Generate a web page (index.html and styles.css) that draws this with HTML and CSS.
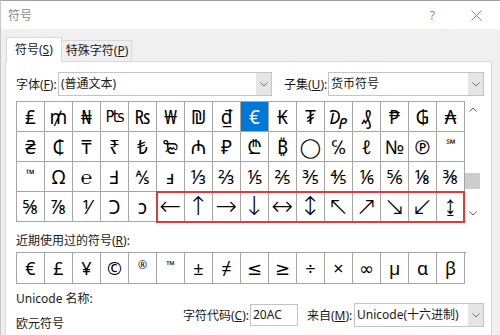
FILE: index.html
```html
<!DOCTYPE html>
<html>
	<head>
	<meta charset="utf-8">
	<meta name="viewport" content="width=device-width, initial-scale=1.0"/>
	<link rel="stylesheet" href="styles.css">
	</head>
	<body>
		<div class="window">
			<div class="titlebar">
				<span class="title">符号</span>
				<span class="help">?</span>
				<svg class="close" width="11" height="11" viewBox="0 0 11 11"><path d="M0.5 0.5 L10.5 10.5 M10.5 0.5 L0.5 10.5" stroke="#8c8c8c" stroke-width="1" fill="none"/></svg>
			</div>
			<div class="tabs">
				<div class="tab active">符号(<u>S</u>)</div>
				<div class="tab">特殊字符(<u>P</u>)</div>
			</div>
			<div class="panel">
				<div class="fontrow">
					<span class="lbl font-lbl">字体(<u>F</u>):</span>
					<div class="combo font-combo">
						<span class="combo-text">(普通文本)</span>
						<span class="drop"><svg width="8" height="5" viewBox="0 0 8 5"><polyline points="0.5,0.5 4,4 7.5,0.5" stroke="#707070" fill="none"/></svg></span>
					</div>
					<span class="lbl subset-lbl">子集(<u>U</u>):</span>
					<div class="combo subset-combo">
						<span class="combo-text">货币符号</span>
						<span class="drop"><svg width="8" height="5" viewBox="0 0 8 5"><polyline points="0.5,0.5 4,4 7.5,0.5" stroke="#707070" fill="none"/></svg></span>
					</div>
				</div>

				<div class="grid-wrap">
					<div class="grid">
						<div class="cell">₤</div><div class="cell">₥</div><div class="cell">₦</div><div class="cell dv">₧</div>
						<div class="cell">₨</div><div class="cell">₩</div><div class="cell">₪</div><div class="cell">₫</div>
						<div class="cell selected">€</div><div class="cell">₭</div><div class="cell">₮</div><div class="cell">₯</div>
						<div class="cell">₰</div><div class="cell">₱</div><div class="cell">₲</div><div class="cell">₳</div>

						<div class="cell">₴</div><div class="cell">₵</div><div class="cell">₸</div><div class="cell">₹</div>
						<div class="cell">₺</div><div class="cell">₻</div><div class="cell">₼</div><div class="cell">₽</div>
						<div class="cell">₾</div><div class="cell">₿</div><div class="cell circle">◯</div><div class="cell">℅</div>
						<div class="cell">ℓ</div><div class="cell">№</div><div class="cell">℗</div><div class="cell small">℠</div>

						<div class="cell small">™</div><div class="cell">Ω</div><div class="cell">℮</div><div class="cell">Ⅎ</div>
						<div class="cell">⅍</div><div class="cell">ⅎ</div><div class="cell">⅓</div><div class="cell">⅔</div>
						<div class="cell">⅕</div><div class="cell">⅖</div><div class="cell">⅗</div><div class="cell">⅘</div>
						<div class="cell">⅙</div><div class="cell">⅚</div><div class="cell">⅛</div><div class="cell">⅜</div>

						<div class="cell">⅝</div><div class="cell">⅞</div><div class="cell">⅟</div><div class="cell">Ↄ</div>
						<div class="cell">ↄ</div><div class="cell arr">←</div><div class="cell arr">↑</div><div class="cell arr">→</div>
						<div class="cell arr">↓</div><div class="cell arr">↔</div><div class="cell arr">↕</div><div class="cell arr">↖</div>
						<div class="cell arr">↗</div><div class="cell arr">↘</div><div class="cell arr">↙</div><div class="cell arr">↨</div>

						<div class="mark"></div>
					</div>
					<div class="scrollbar">
						<div class="arrow"><svg width="8" height="5" viewBox="0 0 8 5"><polyline points="0.5,4.5 4,1 7.5,4.5" stroke="#606060" fill="none"/></svg></div>
						<div class="track"><div class="thumb"></div></div>
						<div class="arrow"><svg width="8" height="5" viewBox="0 0 8 5"><polyline points="0.5,0.5 4,4 7.5,0.5" stroke="#606060" fill="none"/></svg></div>
					</div>
				</div>

				<div class="recent-lbl">近期使用过的符号(<u>R</u>):</div>
				<div class="recent">
					<div class="cell">€</div><div class="cell">£</div><div class="cell">¥</div><div class="cell">©</div>
					<div class="cell small">®</div><div class="cell small">™</div><div class="cell">±</div><div class="cell">≠</div>
					<div class="cell">≤</div><div class="cell">≥</div><div class="cell">÷</div><div class="cell">×</div>
					<div class="cell">∞</div><div class="cell">µ</div><div class="cell">α</div><div class="cell">β</div>
				</div>

				<div class="info">
					<div class="names">
						<div class="line">Unicode 名称:</div>
						<div class="line">欧元符号</div>
					</div>
					<div class="coderow">
						<span class="lbl code-lbl">字符代码(<u>C</u>):</span>
						<div class="input">20AC</div>
						<span class="lbl from-lbl">来自(<u>M</u>):</span>
						<div class="combo from-combo">
							<span class="combo-text">Unicode(十六进制)</span>
							<span class="drop"><svg width="8" height="5" viewBox="0 0 8 5"><polyline points="0.5,0.5 4,4 7.5,0.5" stroke="#707070" fill="none"/></svg></span>
						</div>
					</div>
				</div>
			</div>
		</div>
	</body>
</html>
```

FILE: styles.css
```css
	body {
		margin: 0;
		background-color: #f0f0f0;
	}

	.window {
		width: 500px;
		height: 335px;
		box-sizing: border-box;
		overflow: hidden;
		background-color: #f0f0f0;
		border-top: 1px solid #a0a0a0;
		border-left: 1px solid #c8c8c8;
		display: flex;
		flex-direction: column;
		font-family: "Noto Sans", "Noto Sans CJK SC", sans-serif;
		font-size: 12px;
		color: #1a1a1a;
	}

	.titlebar {
		height: 28px;
		flex: none;
		background-color: #ffffff;
		display: flex;
		align-items: center;
		padding-left: 7px;
	}

	.title {
		flex: 1;
		color: #8c8c8c;
	}

	.help {
		color: #8c8c8c;
		margin-right: 36px;
	}

	.close {
		margin-right: 18px;
	}

	.tabs {
		height: 32px;
		flex: none;
		box-sizing: border-box;
		display: flex;
		align-items: flex-end;
		padding-left: 5px;
	}

	.tab {
		height: 21px;
		line-height: 20px;
		box-sizing: border-box;
		padding: 0 3px 0 4px;
		border: 1px solid #d9d9d9;
		border-bottom: none;
		border-left: none;
		background-color: #f0f0f0;
	}

	.tab.active {
		height: 25px;
		line-height: 23px;
		margin-bottom: -1px;
		padding: 0 8px;
		border-left: 1px solid #d9d9d9;
		background-color: #ffffff;
		position: relative;
		z-index: 1;
	}

	.panel {
		flex: 1;
		background-color: #ffffff;
		border: 1px solid #d9d9d9;
		margin: 0 8px 0 4px;
		padding: 10px 7px 0 10px;
	}

	.fontrow, .coderow {
		display: flex;
		align-items: center;
	}

	.lbl {
		white-space: nowrap;
	}

	.font-lbl {
		width: 42px;
	}

	.subset-lbl {
		width: 44px;
		margin-left: 12px;
	}

	.combo {
		height: 24px;
		box-sizing: border-box;
		border: 1px solid #c4c4c4;
		display: flex;
		align-items: stretch;
	}

	.font-combo {
		width: 214px;
	}

	.subset-combo, .from-combo {
		flex: 1;
	}

	.combo-text {
		flex: 1;
		padding-left: 2px;
		line-height: 22px;
	}

	.drop {
		width: 15px;
		background-color: #e5e5e5;
		display: flex;
		align-items: center;
		justify-content: center;
	}

	.grid-wrap {
		display: flex;
		margin-top: 5px;
	}

	.grid, .recent {
		display: grid;
		grid-template-columns: repeat(16, 28px);
		border-top: 1px solid #a6a6a6;
		border-left: 1px solid #a6a6a6;
		font-family: "Noto Sans", "DejaVu Sans", sans-serif;
		position: relative;
	}

	.cell {
		height: 30px;
		box-sizing: border-box;
		border-right: 1px solid #a6a6a6;
		border-bottom: 1px solid #a6a6a6;
		display: flex;
		align-items: center;
		justify-content: center;
		font-size: 19px;
		color: #000000;
	}

	.cell.dv {
		font-family: "DejaVu Sans", sans-serif;
		font-size: 15px;
		letter-spacing: -1px;
	}

	.cell.small {
		font-size: 12px;
		align-items: flex-start;
		padding-top: 3px;
	}

	.cell.arr {
		font-family: "DejaVu Sans", sans-serif;
		font-weight: 200;
		font-size: 26px;
		padding-bottom: 2px;
	}

	.cell.selected {
		background-color: #0078d7;
		color: #ffffff;
	}

	.mark {
		position: absolute;
		left: 139px;
		top: 89px;
		width: 309px;
		height: 32px;
		box-sizing: border-box;
		border: 2px solid #e03a41;
	}

	.scrollbar {
		width: 15px;
		display: flex;
		flex-direction: column;
	}

	.arrow {
		height: 17px;
		display: flex;
		align-items: center;
		justify-content: center;
	}

	.track {
		flex: 1;
	}

	.thumb {
		margin-top: 55px;
		height: 16px;
		background-color: #cdcdcd;
	}

	.recent-lbl {
		margin-top: 11px;
		line-height: 16px;
	}

	.recent {
		margin-top: 3px;
		width: 449px;
	}

	.recent .cell {
		height: 31px;
		font-size: 18px;
	}

	.recent .cell.small {
		font-size: 11px;
		padding-top: 4px;
	}

	.info {
		display: flex;
		margin-top: 7px;
	}

	.names {
		width: 167px;
	}

	.line {
		line-height: 16px;
		margin-bottom: 9px;
	}

	.coderow {
		flex: 1;
		margin-top: 12px;
		align-self: flex-start;
	}

	.code-lbl {
		width: 67px;
	}

	.input {
		width: 48px;
		height: 22px;
		box-sizing: border-box;
		border: 1px solid #c4c4c4;
		padding-left: 2px;
		line-height: 20px;
	}

	.from-lbl {
		width: 47px;
		margin-left: 9px;
	}

	.from-combo {
		height: 24px;
	}
```
